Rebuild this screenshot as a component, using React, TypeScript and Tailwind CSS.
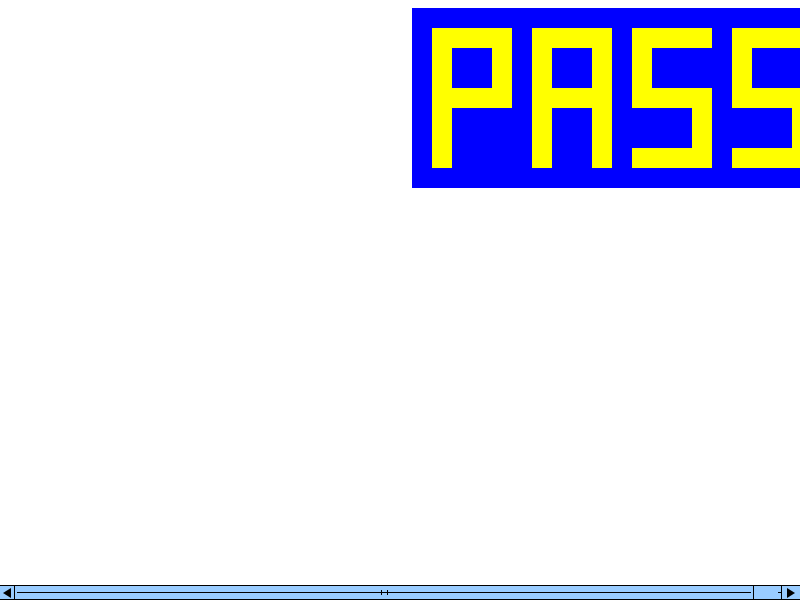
const P = ["####", "#..#", "#..#", "####", "#...", "#...", "#..."];
const A = ["####", "#..#", "#..#", "####", "#..#", "#..#", "#..#"];
const S = ["####", "#...", "#...", "####", "...#", "...#", "####"];

function Letter({ rows }: { rows: string[] }) {
  return (
    <div className="grid grid-cols-[repeat(4,20px)] grid-rows-[repeat(7,20px)] shrink-0">
      {rows.join("").split("").map((c, i) => (
        <div key={i} className={c === "#" ? "bg-[#ffff00]" : ""} />
      ))}
    </div>
  );
}

function Scrollbar() {
  return (
    <div className="h-[15px] shrink-0 flex bg-[#99ccff] border-y border-black">
      <div className="w-[15px] shrink-0 border-r border-black flex items-center justify-center">
        <svg width="10" height="10" viewBox="0 0 10 10">
          <polygon points="9,0 9,10 1,5" fill="#000" />
        </svg>
      </div>
      <div className="flex-1 flex">
        <div className="w-[739px] shrink-0 border-r border-black flex items-center px-[2px] relative">
          <div className="flex-1 h-px bg-black" />
          <div className="absolute left-[366px] top-[4px] h-[5px] w-px bg-black" />
          <div className="absolute left-[372px] top-[4px] h-[5px] w-px bg-black" />
        </div>
        <div className="flex-1 flex items-center justify-end">
          <div className="w-[3px] h-px bg-black" />
        </div>
      </div>
      <div className="w-[19px] shrink-0 border-l border-black flex items-center justify-center">
        <svg width="10" height="10" viewBox="0 0 10 10">
          <polygon points="1,0 1,10 9,5" fill="#000" />
        </svg>
      </div>
    </div>
  );
}

export default function App() {
  return (
    <div className="h-[600px] w-[800px] flex flex-col bg-white overflow-hidden">
      <div className="flex-1 overflow-hidden pt-[8px] pl-[412px]">
        <div className="w-[420px] bg-[#0000ff] p-5 flex gap-5">
          <Letter rows={P} />
          <Letter rows={A} />
          <Letter rows={S} />
          <Letter rows={S} />
        </div>
      </div>
      <Scrollbar />
    </div>
  );
}
